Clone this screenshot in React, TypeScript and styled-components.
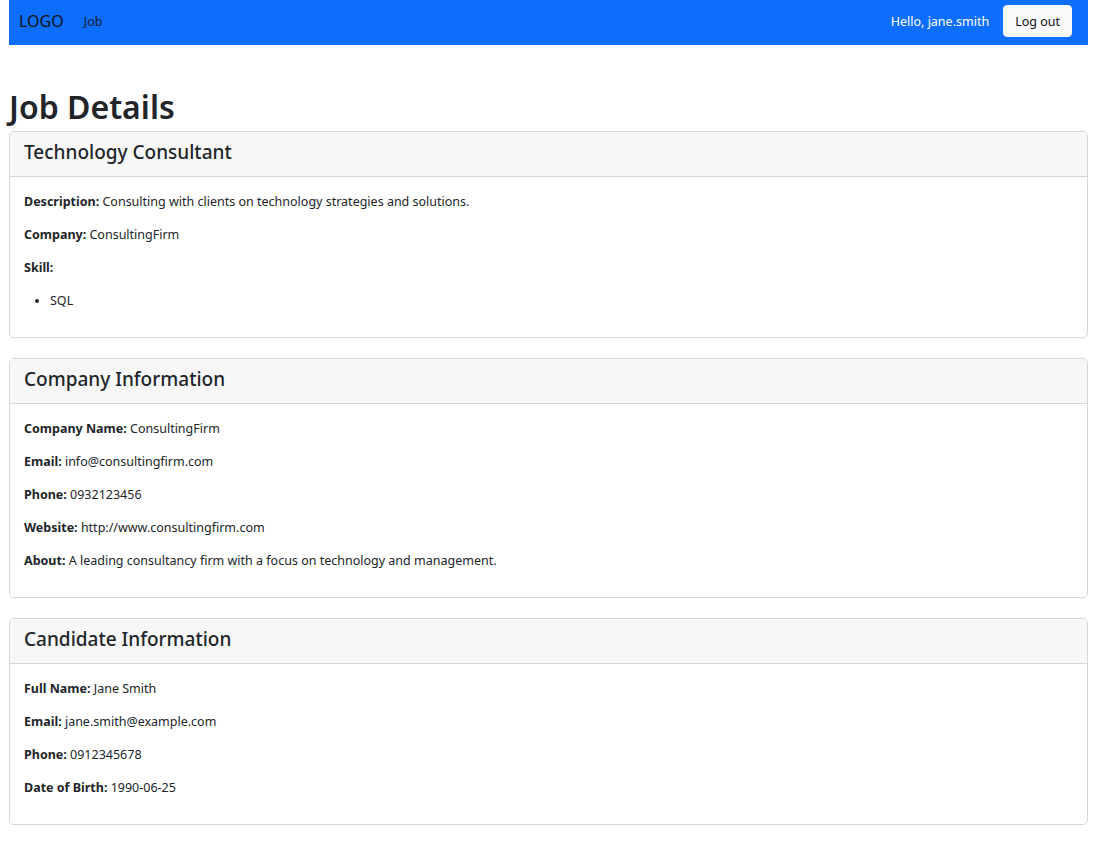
import styled, { createGlobalStyle } from "styled-components";

const GlobalStyle = createGlobalStyle`
  body {
    margin: 0;
    font-family: "Noto Sans", "Open Sans", sans-serif;
    font-size: 12.5px;
    color: #212529;
    background: #fff;
  }
  * { box-sizing: border-box; }
`;

const Page = styled.div`
  padding: 0 13px 23px 9px;
`;

const Navbar = styled.nav`
  height: 45px;
  background-color: #0d6efd;
  display: flex;
  align-items: center;
  padding: 0 16px 3px 10px;
`;

const Brand = styled.span`
  font-size: 16px;
  color: #111;
  margin-right: 20px;
`;

const NavLink = styled.span`
  font-size: 12.5px;
  color: #1a1a2e;
`;

const Spacer = styled.div`
  flex: 1;
`;

const Greeting = styled.span`
  color: #fff;
  font-size: 12.5px;
  margin-right: 14px;
`;

const Button = styled.button`
  font-family: inherit;
  font-size: 12.5px;
  background: #f8f9fa;
  color: #111;
  border: 1px solid #f8f9fa;
  border-radius: 4px;
  height: 32px;
  padding: 0 11px;
`;

const Title = styled.h1`
  font-size: 32px;
  font-weight: 600;
  line-height: 41px;
  margin: 41px 0 4px;
`;

const Card = styled.section`
  border: 1px solid #d6d6d6;
  border-radius: 5px;
  margin-bottom: 20px;
  overflow: hidden;
`;

const CardHeader = styled.header`
  background: #f7f7f7;
  border-bottom: 1px solid #d6d6d6;
  padding: 8px 14px 12px;
`;

const CardTitle = styled.h4`
  margin: 0;
  font-size: 19px;
  font-weight: 500;
  line-height: 24px;
`;

const CardBody = styled.div`
  padding: 15px 14px 13px;
`;

const Field = styled.p`
  margin: 0 0 13px;
  line-height: 20px;
  b { font-weight: 700; }
`;

const List = styled.ul`
  margin: 0 0 13px;
  padding-left: 26px;
  line-height: 20px;
`;

type Row = [string, string];

const InfoCard = ({ title, rows, children }: { title: string; rows: Row[]; children?: React.ReactNode }) => (
  <Card>
    <CardHeader>
      <CardTitle>{title}</CardTitle>
    </CardHeader>
    <CardBody>
      {rows.map(([k, v]) => (
        <Field key={k}>
          <b>{k}:</b>{v ? " " + v : ""}
        </Field>
      ))}
      {children}
    </CardBody>
  </Card>
);

export default function App() {
  return (
    <Page>
      <GlobalStyle />
      <Navbar>
        <Brand>LOGO</Brand>
        <NavLink>Job</NavLink>
        <Spacer />
        <Greeting>Hello, jane.smith</Greeting>
        <Button>Log out</Button>
      </Navbar>
      <Title>Job Details</Title>
      <InfoCard
        title="Technology Consultant"
        rows={[
          ["Description", "Consulting with clients on technology strategies and solutions."],
          ["Company", "ConsultingFirm"],
          ["Skill", ""],
        ]}
      >
        <List>
          <li>SQL</li>
        </List>
      </InfoCard>
      <InfoCard
        title="Company Information"
        rows={[
          ["Company Name", "ConsultingFirm"],
          ["Email", "info@consultingfirm.com"],
          ["Phone", "0932123456"],
          ["Website", "http://www.consultingfirm.com"],
          ["About", "A leading consultancy firm with a focus on technology and management."],
        ]}
      />
      <InfoCard
        title="Candidate Information"
        rows={[
          ["Full Name", "Jane Smith"],
          ["Email", "jane.smith@example.com"],
          ["Phone", "0912345678"],
          ["Date of Birth", "1990-06-25"],
        ]}
      />
    </Page>
  );
}
